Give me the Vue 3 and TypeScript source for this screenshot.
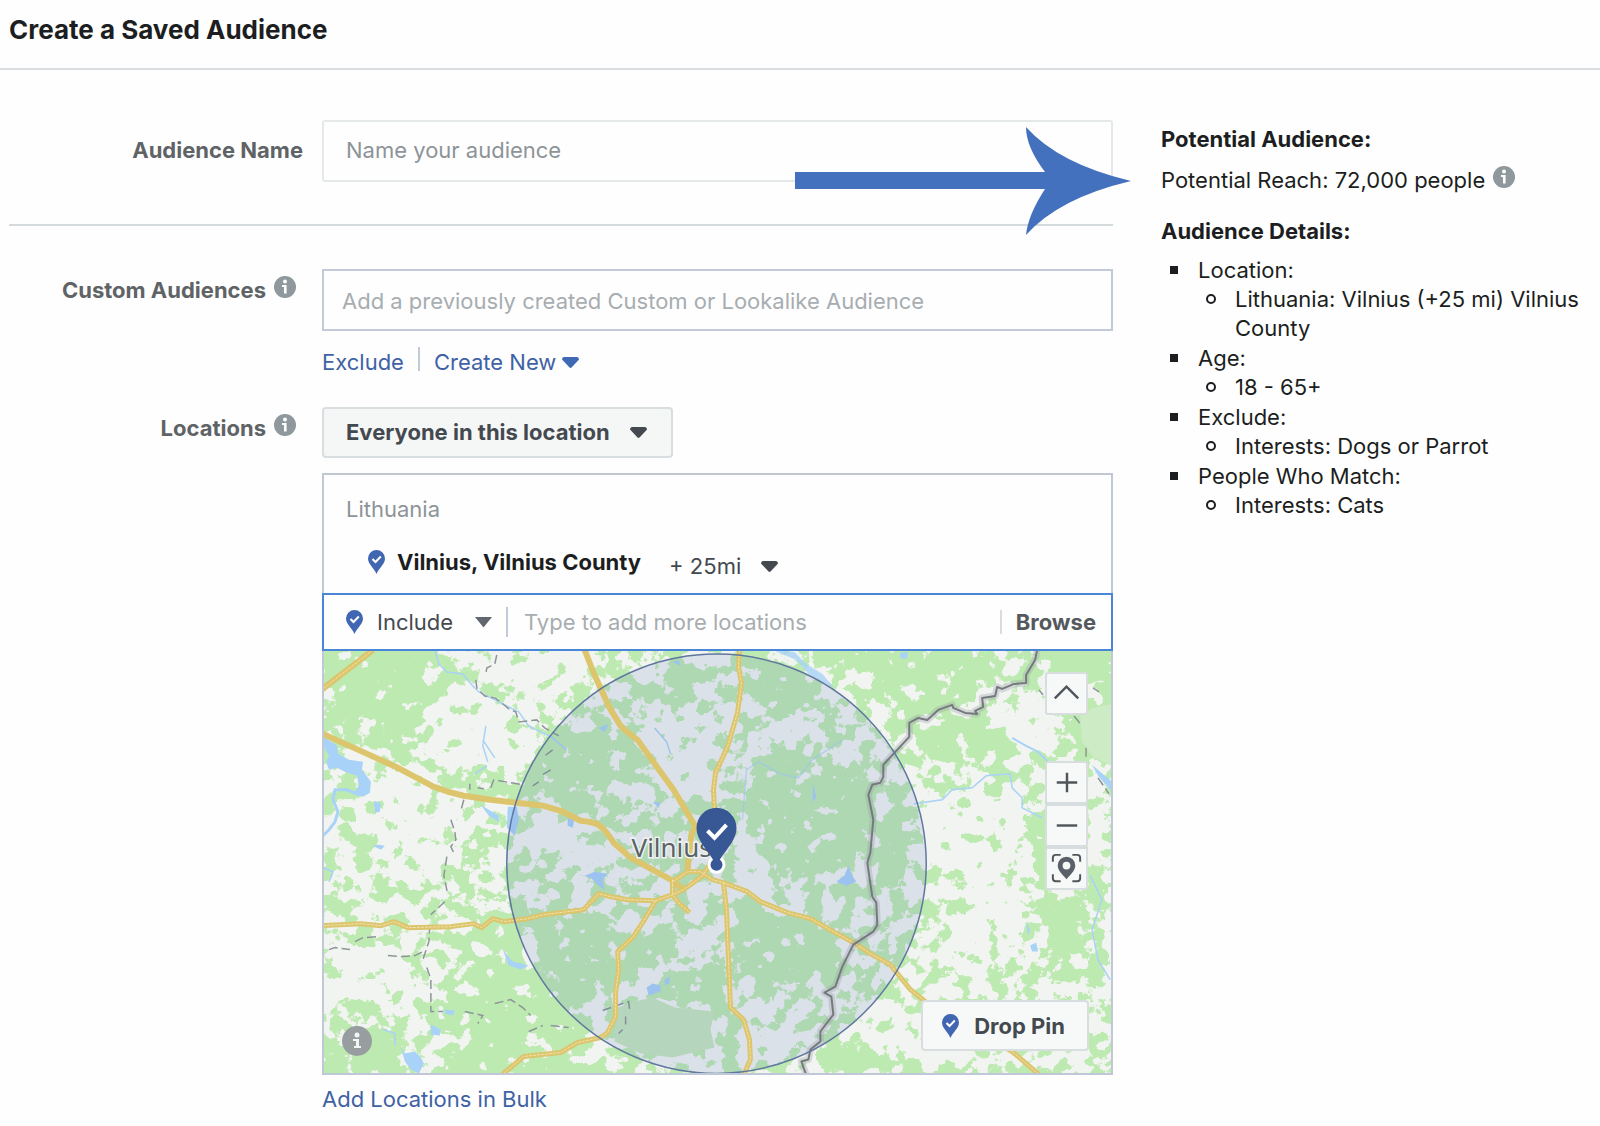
<script setup lang="ts">
import { ref } from 'vue'

interface DetailGroup {
  title: string
  items: string[]
}

const audienceName = ref('')
const customAudience = ref('')
const locationQuery = ref('')

const details: DetailGroup[] = [
  { title: 'Location:', items: ['Lithuania: Vilnius (+25 mi) Vilnius County'] },
  { title: 'Age:', items: ['18 - 65+'] },
  { title: 'Exclude:', items: ['Interests: Dogs or Parrot'] },
  { title: 'People Who Match:', items: ['Interests: Cats'] },
]

// Dense forest areas of the map
const forests: string[] = [
  'M4 0H98L128 38L102 58L96 88L88 106L62 94L38 84L6 74Z',
  'M118 130L145 112L168 138L150 146Z',
  'M196 90L240 78L290 96V150L250 156L205 140Z',
  'M272 78L300 82L325 110L300 124L278 118Z',
  'M420 115L450 100L500 120L540 110L552 150L545 205L500 225L440 210L420 170Z',
  'M470 0H600L592 40L560 30L520 20Z',
  'M540 4H672L664 46L620 52L585 64L560 40Z',
  'M596 78L640 66L690 84L694 106L620 112L598 100Z',
  'M716 0H790V34L740 30Z',
  'M740 56L790 50V110L758 116Z',
  'M700 150L725 160L728 230L712 235Z',
  'M722 236L768 240L760 300L740 330L726 300Z',
  'M554 155L584 165L582 228L556 235Z',
  'M198 245L250 270L292 262L290 345L245 352L212 310Z',
  'M300 292L340 275L368 292L345 322L300 332Z',
  'M340 330L400 310L406 358L352 362Z',
  'M125 340L190 290L235 350L270 390L200 408L178 424H130Z',
  'M206 410L250 400L275 424H190Z',
  'M340 20L378 12L372 52L340 60Z',
  'M430 10L490 20L500 60L440 70Z',
  'M412 250L500 275L520 300L505 330L440 330L412 300Z',
  'M500 392L560 395L600 424H500Z',
  'M0 392L60 370L80 424H0Z',
  'M290 230L345 170L330 215Z',
  'M140 260L200 250L195 285L145 290Z',
]

// Open land where trees are rare
const clearings: string[] = [
  'M100 56L150 40L215 70L205 120L150 118L100 110Z',
  'M40 110L110 140L150 158L130 220L60 210L50 160Z',
  'M600 148L700 140L702 215L650 236L600 200Z',
  'M686 44L712 52L728 100L700 100L682 74Z',
  'M8 296L95 292L90 348L10 350Z',
  'M320 68L390 60L388 150L350 140L322 96Z',
  'M425 70L500 66L500 92L430 100Z',
  'M362 258L388 275L380 305L345 330L282 358L282 345L345 312L372 285Z',
  'M415 365L480 372L478 408L432 402Z',
  'M540 365L600 350L606 405L545 400Z',
  'M400 185L440 200L450 245L410 232Z',
  'M205 158L290 195L270 215L205 200Z',
  'M640 240L700 235L690 300L625 320Z',
  'M150 4H255L262 40L180 30Z',
]

const roads: string[] = [
  'M0 84L31 98L75 118L111 137Q126 143 141 146L168 150L221 156L238 161L258 171Q270 172 276 175Q284 181 291 193L308 208L328 219L350 231L361 240',
  'M-3 41L50 0',
  'M262 0L271 23L287 58L298 76Q306 84 315 90L335 118L351 140L373 177L369 184L366 208L365 221',
]

const streets: string[] = [
  'M0 276L38 274L58 276L71 272L85 278L128 277L151 274L159 278L170 269L181 272L205 269L221 265L261 260L276 244L288 247L305 250L333 251L350 245L361 240L380 226L388 213',
  'M350 232L365 222L378 222L390 230L401 233L425 242L438 252L465 263L488 269L511 282L533 294L548 304L568 315L588 340L603 352L690 402L718 426',
  'M350 230V245L356 253L367 263',
  'M401 233L404 260L406 310L408 358L421 370L427 390L428 410L421 426',
  'M333 251L320 273L310 288L295 302L296 320L293 343V367L285 383L278 388L255 393L238 403L201 407L176 428',
  'M417 0L416 17L419 33L415 63L405 97L393 123L391 140L392 160',
]

const districtLines: string[] = [
  'M174 5L172 14L164 18L163 24M153 30L154 38L162 46L172 48L179 53L186 59L193 62L196 72L214 70L222 78L236 86',
  'M168 138L171 130L200 135M147 134V140M155 138L161 139M141 150L138 161M128 170L132 182L133 190L128 197L131 203M124 207L121 226L125 245M122 252L108 265M107 275L106 292L100 310M104 318L108 330L108 362L120 362',
  'M32 292L40 288L56 287M65 306L80 307L92 306L100 302M6 300L12 298L27 300M142 362L160 366L155 374M172 354L188 350L200 358L208 366M206 382L220 376M228 376L246 378',
  'M280 361L297 355L306 352L307 360M303 367V375M300 380L296 384',
  'M230 100L222 106M228 120L218 126M216 132L210 136',
  'M752 66L760 76M745 45L750 50M764 98V110M776 128L787 144M771 38L777 42M717 40L721 45',
]
</script>

<template>
  <div class="page">
    <header class="page-head">
      <h1>Create a Saved Audience</h1>
    </header>

    <div class="columns">
      <main class="form">
        <section class="row name-row">
          <label class="row-label plain" for="audience-name">Audience Name</label>
          <div class="row-body">
            <input id="audience-name" v-model="audienceName" class="name-input" type="text" placeholder="Name your audience" />
            <svg class="arrow" width="336" height="108" viewBox="0 0 336 108" aria-hidden="true">
              <path d="M0 45H250Q231 20 231 0Q264 37 336 54Q264 71 231 108Q233 88 250 62H0Z" fill="#4371bd" />
            </svg>
          </div>
        </section>

        <section class="row custom-row">
          <label class="row-label" for="custom-audiences">
            Custom Audiences
            <svg class="info" viewBox="0 0 22 22" aria-hidden="true">
              <circle cx="11" cy="11" r="11" fill="#8f989c" />
              <circle cx="11" cy="5.6" r="2" fill="#fff" />
              <path d="M8 9H12.6V17.4H10V11H8Z" fill="#fff" />
            </svg>
          </label>
          <div class="row-body">
            <input id="custom-audiences" v-model="customAudience" class="custom-input" type="text" placeholder="Add a previously created Custom or Lookalike Audience" />
            <div class="links">
              <a href="#exclude">Exclude</a>
              <span class="bar"></span>
              <button type="button" class="create">
                Create New
                <svg class="caret" viewBox="0 0 17 11" aria-hidden="true"><path d="M2 0H15Q17 0 17 2.5L9.5 10.5Q8.5 11.4 7.5 10.5L0 2.5Q0 0 2 0Z" fill="#4069b5" /></svg>
              </button>
            </div>
          </div>
        </section>

        <section class="row loc-row">
          <label class="row-label" for="location-type">
            Locations
            <svg class="info" viewBox="0 0 22 22" aria-hidden="true">
              <circle cx="11" cy="11" r="11" fill="#8f989c" />
              <circle cx="11" cy="5.6" r="2" fill="#fff" />
              <path d="M8 9H12.6V17.4H10V11H8Z" fill="#fff" />
            </svg>
          </label>
          <div class="row-body">
            <div class="type-box">
              <select id="location-type">
                <option>Everyone in this location</option>
              </select>
              <svg class="caret" viewBox="0 0 17 11" aria-hidden="true"><path d="M2 0H15Q17 0 17 2.5L9.5 10.5Q8.5 11.4 7.5 10.5L0 2.5Q0 0 2 0Z" fill="#444950" /></svg>
            </div>

            <div class="picker">
              <div class="chosen">
                <div class="country">Lithuania</div>
                <div class="city">
                  <svg class="pin" viewBox="0 0 17 24" aria-hidden="true">
                    <path d="M8.5 0A8.5 8.5 0 0 1 17 8.5C17 14 11 18 8.5 24C6 18 0 14 0 8.5A8.5 8.5 0 0 1 8.5 0Z" fill="#4267b2" />
                    <path d="M4.5 9L7.5 12L12.8 6.5" fill="none" stroke="#fff" stroke-width="2" />
                  </svg>
                  <strong>Vilnius, Vilnius County</strong>
                  <div class="radius">
                    <select aria-label="Radius">
                      <option>+ 25mi</option>
                    </select>
                    <svg class="caret" viewBox="0 0 17 11" aria-hidden="true"><path d="M2 0H15Q17 0 17 2.5L9.5 10.5Q8.5 11.4 7.5 10.5L0 2.5Q0 0 2 0Z" fill="#444950" /></svg>
                  </div>
                </div>
              </div>

              <div class="search">
                <svg class="pin" viewBox="0 0 17 24" aria-hidden="true">
                  <path d="M8.5 0A8.5 8.5 0 0 1 17 8.5C17 14 11 18 8.5 24C6 18 0 14 0 8.5A8.5 8.5 0 0 1 8.5 0Z" fill="#4267b2" />
                  <path d="M4.5 9L7.5 12L12.8 6.5" fill="none" stroke="#fff" stroke-width="2" />
                </svg>
                <div class="mode">
                  <select aria-label="Include or exclude">
                    <option>Include</option>
                  </select>
                  <svg class="caret" viewBox="0 0 17 11" aria-hidden="true"><path d="M0 0H17L8.5 10.5Z" fill="#606770" /></svg>
                </div>
                <span class="bar tall"></span>
                <input v-model="locationQuery" type="text" aria-label="Add locations" placeholder="Type to add more locations" />
                <span class="bar pale"></span>
                <button type="button" class="browse">Browse</button>
              </div>

              <div class="map">
                <svg class="map-art" viewBox="1 1 788 423" preserveAspectRatio="xMidYMid slice" role="img" aria-label="Map of the area around Vilnius">
                  <defs>
                    <filter id="forest" x="0" y="0" width="792" height="426" filterUnits="userSpaceOnUse" color-interpolation-filters="sRGB">
                      <feGaussianBlur in="SourceGraphic" stdDeviation="5" />
                      <feColorMatrix values="0 0 0 0 0  0 0 0 0 0  0 0 0 0 0  1 0 0 0 0" result="density" />
                      <feTurbulence type="fractalNoise" baseFrequency="0.06" numOctaves="6" seed="11" />
                      <feColorMatrix values="0 0 0 0 0  0 0 0 0 0  0 0 0 0 0  1 0 0 0 0" result="noise" />
                      <feComposite in="noise" in2="density" operator="arithmetic" k2="1" k3="0.46" k4="-0.23" />
                      <feComponentTransfer result="mask"><feFuncA type="linear" slope="24" intercept="-11.9" /></feComponentTransfer>
                      <feFlood flood-color="#bdeab1" />
                      <feComposite in2="mask" operator="in" />
                    </filter>
                  </defs>

                  <rect width="792" height="426" fill="#f2f4f1" />
                  <g filter="url(#forest)">
                    <rect width="792" height="426" fill="#808080" />
                    <path v-for="d in forests" :key="d" :d="d" fill="#e8e8e8" />
                    <path v-for="d in clearings" :key="d" :d="d" fill="#303030" />
                  </g>
                  <path d="M295 358L312 352L330 348L352 358L392 362L388 380L392 398L350 408L318 404L292 392Z" fill="#c6e7be" />
                  <path d="M758 66L770 58L790 54V116L772 108L760 92Z" fill="#cdebc4" />

                  <g fill="#a9d2f8">
                    <path d="M0 86L14 96L15 104L26 110L40 112L39 120L48 132L47 143L40 147L30 144L36 136L34 126L22 122L14 118L6 120L3 112L6 106L0 96Z" />
                    <path d="M51 151L58 154L57 162L52 163Z" />
                    <path d="M50 196L56 195L62 196L58 200Z" />
                    <path d="M185 157H194L196 170L192 186L184 178Z" />
                    <path d="M158 155L166 160L176 166V172L166 166Z" />
                    <path d="M78 398L82 404L92 402L98 408L101 414L96 424L88 420L82 412Z" />
                    <path d="M108 375L118 380L117 386L108 385Z" />
                    <path d="M180 300L190 312L206 316L198 320L186 316Z" />
                    <path d="M122 360L132 361L130 366L122 364Z" />
                    <path d="M514 232L522 226L526 216L530 226L534 232L524 236Z" />
                    <path d="M324 338L330 334L338 336V342L326 346ZM342 330L347 327V334L342 336Z" />
                    <path d="M254 224L262 226L272 222L285 224L280 230L282 240L276 236L268 228Z" />
                    <path d="M770 115L790 132V142L776 126Z" />
                    <path d="M708 296L714 293L716 302L710 302ZM704 272L708 280L706 286Z" />
                    <path d="M450 0L472 2L484 14L500 24L512 38L500 32L486 24L474 10Z" opacity=".8" />
                    <path d="M245 166L252 168L250 178L245 176ZM276 78L286 74L282 82ZM350 12L356 10L358 16Z" />
                    <path d="M578 3L586 2L584 9L578 8ZM330 152L338 153L336 158ZM491 134L494 148L490 152Z" />
                  </g>
                  <g fill="none" stroke="#a9d2f8" stroke-width="1.5">
                    <path d="M112 0L116 14L124 22L140 24L150 36L156 42L176 52L196 62L206 76L230 88L244 100" />
                    <path d="M36 145L24 140L12 140L10 150L15 162L12 172L6 180L0 186" stroke-width="3" />
                    <path d="M163 76L160 96L165 112M160 90L172 108M152 124L164 116" />
                    <path d="M592 154L620 150L630 140L650 138L664 126L688 124L690 138L700 148L700 158L720 168" />
                    <path d="M690 88L704 96L716 102L726 112" stroke-width="2" />
                    <path d="M420 170L424 120L436 112L458 124L476 128L490 110L520 90" opacity=".6" />
                    <path d="M768 226L780 250L770 280L776 310L788 330" />
                    <path d="M332 78L344 92L348 104M0 218L10 222L6 232M60 380L72 384L72 396" />
                  </g>

                  <g fill="none" stroke="#8d9598" stroke-width="1.5" stroke-dasharray="9 4">
                    <path v-for="d in districtLines" :key="d" :d="d" />
                  </g>

                  <circle cx="394" cy="214" r="210" fill="#4267b2" fill-opacity=".13" />

                  <g fill="none" stroke="#dcc56c" stroke-linejoin="round">
                    <path v-for="d in roads" :key="d" :d="d" stroke-width="6" />
                    <path v-for="d in streets" :key="d" :d="d" stroke-width="5" />
                  </g>
                  <g fill="none" stroke="#efe2ac" stroke-width="1" stroke-linejoin="round" stroke-dasharray="3 1">
                    <path v-for="d in streets" :key="d" :d="d" />
                    <path d="M-3 41L50 0" />
                  </g>

                  <g fill="none" stroke-linejoin="round">
                    <path v-for="w in [7, 2]" :key="w" :stroke-width="w" :stroke="w === 7 ? '#9aa0a455' : '#74797e'" d="M715 0L713 10L704 25V33L692 34L680 39L675 37L673 46L660 48L661 57L653 61L655 64L643 63L631 58L630 55L616 60L605 70L596 68L587 73V87L573 102L561 115V127L558 133L550 135L546 145L551 170L548 203L545 213L550 247L554 253L555 275L551 282L531 295L520 317L513 337L502 343L509 347L511 365L498 382V392L488 400L486 410L479 412L484 426" />
                  </g>

                  <circle cx="394" cy="214" r="210" fill="none" stroke="#60779f" stroke-width="1.5" />

                  <text class="place" x="309" y="207">Vilnius</text>

                  <circle cx="394" cy="215" r="9" fill="#fff" />
                  <path d="M394 158A20 20 0 0 1 414 178C414 193 399 203 394 217C389 203 374 193 374 178A20 20 0 0 1 394 158Z" fill="#385795" />
                  <circle cx="394" cy="215" r="6" fill="#385795" />
                  <path d="M385 181L392 188L404 175" fill="none" stroke="#fff" stroke-width="4" />
                </svg>

                <button type="button" class="map-info" aria-label="Map information">
                  <svg width="30" height="30" viewBox="0 0 30 30" aria-hidden="true">
                    <circle cx="15" cy="15" r="15" fill="#989e9f" />
                    <circle cx="15" cy="9" r="2.5" fill="#f4f6f4" />
                    <path d="M11 13H17V20H19V22H12V20H14V15H11Z" fill="#f4f6f4" />
                  </svg>
                </button>

                <div class="controls">
                  <button type="button" class="control" aria-label="Collapse map">
                    <svg viewBox="0 0 40 40" aria-hidden="true"><path d="M8 25L20 13L32 25" fill="none" stroke="#50555c" stroke-width="2.5" /></svg>
                  </button>
                  <div class="zoom">
                    <button type="button" class="control" aria-label="Zoom in">
                      <svg viewBox="0 0 40 40" aria-hidden="true"><path d="M10 20H31M20.5 10V30" fill="none" stroke="#50555c" stroke-width="2.5" /></svg>
                    </button>
                    <button type="button" class="control" aria-label="Zoom out">
                      <svg viewBox="0 0 40 40" aria-hidden="true"><path d="M10 20H31" fill="none" stroke="#50555c" stroke-width="2.5" /></svg>
                    </button>
                    <button type="button" class="control" aria-label="Centre the map">
                      <svg viewBox="0 0 40 40" aria-hidden="true">
                        <path d="M6 13V9Q6 6 9 6H14M26 6H31Q34 6 34 9V13M34 26V30Q34 33 31 33H26M14 33H9Q6 33 6 30V26" fill="none" stroke="#50555c" stroke-width="2" />
                        <path d="M20 8A9 9 0 0 1 29 17C29 23 23 27 20 31C17 27 11 23 11 17A9 9 0 0 1 20 8ZM20 13A4 4 0 1 0 20 21A4 4 0 1 0 20 13Z" fill="#5a606a" fill-rule="evenodd" />
                      </svg>
                    </button>
                  </div>
                </div>

                <button type="button" class="drop-pin">
                  <svg class="pin" viewBox="0 0 17 24" aria-hidden="true">
                    <path d="M8.5 0A8.5 8.5 0 0 1 17 8.5C17 14 11 18 8.5 24C6 18 0 14 0 8.5A8.5 8.5 0 0 1 8.5 0Z" fill="#4267b2" />
                    <path d="M4.5 9L7.5 12L12.8 6.5" fill="none" stroke="#fff" stroke-width="2" />
                  </svg>
                  Drop Pin
                </button>
              </div>
            </div>

            <a class="bulk" href="#bulk">Add Locations in Bulk</a>
          </div>
        </section>
      </main>

      <aside class="summary">
        <h2>Potential Audience:</h2>
        <p class="reach">
          Potential Reach: 72,000 people
          <svg class="info" viewBox="0 0 22 22" aria-hidden="true">
            <circle cx="11" cy="11" r="11" fill="#8f989c" />
            <circle cx="11" cy="5.6" r="2" fill="#fff" />
            <path d="M8 9H12.6V17.4H10V11H8Z" fill="#fff" />
          </svg>
        </p>
        <h2>Audience Details:</h2>
        <ul class="groups">
          <li v-for="group in details" :key="group.title">
            {{ group.title }}
            <ul class="items">
              <li v-for="item in group.items" :key="item">{{ item }}</li>
            </ul>
          </li>
        </ul>
      </aside>
    </div>
  </div>
</template>

<style>
body {
  background: #fefefe;
}
</style>

<style scoped>
.page,
.page button,
.page input,
.page select {
  font-family: Inter, "Liberation Sans", sans-serif;
  font-size: 22px;
  line-height: 30px;
}

.page {
  color: #1c1e21;
  padding-bottom: 8px;
}

.page *,
.page *::before {
  box-sizing: border-box;
}

.page svg {
  display: block;
  flex: none;
}

button,
select,
input {
  margin: 0;
  padding: 0;
  border: 0;
  background: none;
  color: inherit;
}

select {
  appearance: none;
}

input::placeholder {
  color: #a7adb0;
  opacity: 1;
}

a {
  color: #4062a5;
  text-decoration: none;
}

.page-head {
  padding: 14px 9px 22px;
  border-bottom: 2px solid #dadddf;
}

h1 {
  margin: 0;
  font-size: 26px;
  line-height: 32px;
  font-weight: 700;
}

.columns {
  display: grid;
  grid-template-columns: minmax(0, 1fr) 430px;
  gap: 48px;
  padding: 0 9px;
}

.row {
  display: grid;
  grid-template-columns: 313px minmax(0, 1fr);
}

.row-label {
  display: flex;
  justify-content: flex-end;
  gap: 8px;
  padding-right: 26px;
  color: #606366;
  font-weight: 700;
}

.row-label.plain {
  padding-right: 19px;
}

.info {
  width: 22px;
  height: 22px;
  margin-top: 1px;
}

.row-body {
  position: relative;
}

.name-row {
  padding: 50px 0 42px;
  border-bottom: 2px solid #d5dadd;
}

.name-row .row-label {
  padding-top: 15px;
}

.name-input,
.custom-input {
  display: block;
  width: 100%;
  height: 62px;
}

.name-input {
  padding: 0 22px 2px;
  border: 2px solid #e6e9ea;
  border-radius: 3px;
}

.name-input::placeholder {
  color: #8d9498;
}

.arrow {
  position: absolute;
  right: -18px;
  top: 7px;
  z-index: 1;
}

.custom-row {
  padding-top: 43px;
}

.custom-row .row-label {
  padding-top: 6px;
}

.custom-input {
  padding: 1px 18px 0;
  border: 2px solid #c2cad9;
}

.links {
  display: flex;
  align-items: center;
  padding-top: 16px;
}

.bar {
  width: 2px;
  height: 24px;
  margin: 0 14px;
  background: #c2cad9;
}

.links .bar {
  align-self: flex-start;
}

.create {
  display: flex;
  align-items: center;
  gap: 6px;
  color: #4062a5;
}

.caret {
  width: 17px;
  height: 11px;
  pointer-events: none;
}

.loc-row {
  padding-top: 30px;
}

.loc-row .row-label {
  align-self: start;
  padding-top: 6px;
}

.type-box {
  display: inline-flex;
  align-items: center;
  gap: 20px;
  height: 51px;
  padding: 0 24px 1px 22px;
  border: 2px solid #d8dddf;
  border-radius: 4px;
  background: #f5f7f6;
  color: #444950;
  vertical-align: top;
}

.type-box select {
  font-weight: 700;
}

.picker {
  margin-top: 15px;
}

.chosen {
  height: 120px;
  padding: 19px 22px 0;
  border: 2px solid #c0c8d2;
  border-bottom: 0;
}

.country {
  color: #8d9498;
}

.city {
  display: flex;
  align-items: center;
  gap: 12px;
  padding: 19px 0 0 22px;
}

.city strong {
  font-weight: 700;
}

.pin {
  width: 17px;
  height: 24px;
}

.radius {
  display: flex;
  align-items: center;
  gap: 19px;
  padding: 8px 0 0 16px;
  color: #444950;
}

.search {
  display: flex;
  align-items: center;
  height: 58px;
  padding: 0 15px 0 22px;
  border: 2px solid #4a86d8;
}

.mode {
  display: flex;
  align-items: center;
  gap: 21px;
  padding-left: 14px;
  color: #444950;
}

.bar.tall {
  height: 30px;
  margin: 0 16px 0 14px;
}

.bar.pale {
  background: #d8dcdf;
}

.search input {
  flex: 1;
  min-width: 0;
}

.browse {
  color: #55595e;
  font-weight: 700;
}

.map {
  position: relative;
  border: 2px solid #c0c8d8;
  border-top: 0;
}

.page .map-art {
  width: 100%;
  height: auto;
}

.place {
  font-family: "Noto Sans", "Open Sans", sans-serif;
  font-size: 26px;
  fill: #5b6266;
  stroke: #eef2f2;
  stroke-width: 3px;
  paint-order: stroke;
}

.map-info {
  position: absolute;
  left: 18px;
  bottom: 17px;
}

.controls {
  position: absolute;
  top: 21px;
  right: 23px;
  display: flex;
  flex-direction: column;
  gap: 46px;
}

.zoom {
  display: flex;
  flex-direction: column;
}

.control {
  width: 43px;
  height: 43px;
  border: 2px solid #d8dddf;
  border-radius: 3px;
  background: #f7f9f8;
}

.drop-pin {
  position: absolute;
  right: 22px;
  bottom: 22px;
  display: flex;
  align-items: center;
  gap: 15px;
  height: 51px;
  padding: 0 22px 0 19px;
  border: 2px solid #d8dddf;
  border-radius: 4px;
  background: #f7f9f8;
  color: #444950;
  font-weight: 700;
}

.bulk {
  display: inline-block;
  margin-top: 9px;
}

.summary {
  padding-top: 54px;
}

.summary h2 {
  margin: 0;
  font-size: 22px;
  line-height: 30px;
  font-weight: 700;
}

.reach {
  display: flex;
  gap: 8px;
  margin: 11px 0 21px;
}

.groups,
.items {
  margin: 0;
  padding: 0 0 0 37px;
  list-style: none;
  line-height: 29px;
}

.groups {
  margin-top: 10px;
}

.groups > li + li {
  margin-top: 1px;
}

.groups li::before {
  content: "";
  display: inline-block;
  width: 8px;
  height: 8px;
  margin: 0 20px 0 -28px;
  background: #1c1e21;
  vertical-align: 4px;
}

.groups .items > li::before {
  width: 10px;
  height: 10px;
  margin: 0 19px 0 -29px;
  border: 2px solid #1c1e21;
  border-radius: 50%;
  background: none;
  vertical-align: 3px;
}
</style>
